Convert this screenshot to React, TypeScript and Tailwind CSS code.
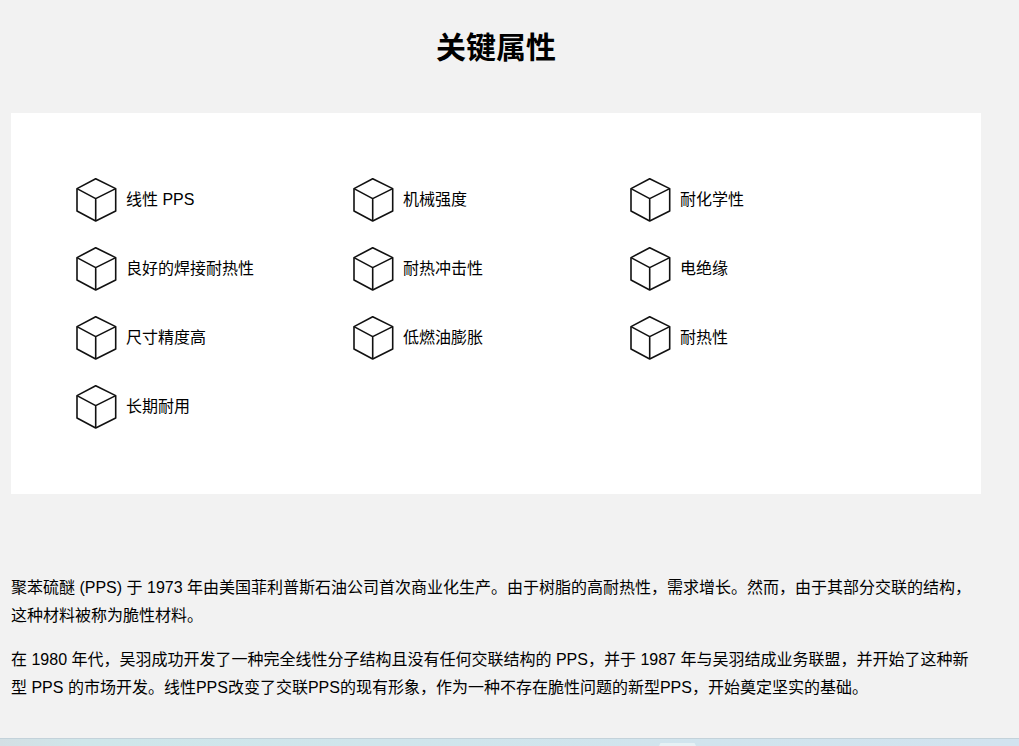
const properties = [
  "线性 PPS",
  "机械强度",
  "耐化学性",
  "良好的焊接耐热性",
  "耐热冲击性",
  "电绝缘",
  "尺寸精度高",
  "低燃油膨胀",
  "耐热性",
  "长期耐用",
];

const CubeIcon = () => (
  <svg width="44" height="44" viewBox="0 0 44 44" fill="none" stroke="#111111" strokeWidth="1.6" strokeLinejoin="round" className="shrink-0">
    <path d="M20.7 0.8L40.7 10.6V33L20.7 43L2 33V10.6Z" />
    <path d="M2 10.6L20.7 20.6L40.7 10.6M20.7 20.6V43" />
  </svg>
);

export default function App() {
  return (
    <div className="relative h-[746px] overflow-hidden bg-[#f2f2f2] font-['Liberation_Sans','Noto_Sans_CJK_SC',sans-serif] text-black">
      <div className="ml-[11px] w-[970px]">
        <h1 className="pt-[28px] text-center text-[30px] font-bold leading-[40px]">关键属性</h1>
        <div className="mt-[45px] h-[381px] bg-white pl-[64px] pt-[65px]">
          <div className="grid grid-cols-[277px_277px_277px] gap-y-[25px]">
            {properties.map((name) => (
              <div key={name} className="flex h-[44px] items-center gap-[7px] text-base">
                <CubeIcon />
                <span>{name}</span>
              </div>
            ))}
          </div>
        </div>
        <div className="mt-[80px] text-base leading-[28px]">
          <p>聚苯硫醚 (PPS) 于 1973 年由美国菲利普斯石油公司首次商业化生产。由于树脂的高耐热性，需求增长。然而，由于其部分交联的结构，这种材料被称为脆性材料。</p>
          <p className="mt-[16px]">在 1980 年代，吴羽成功开发了一种完全线性分子结构且没有任何交联结构的 PPS，并于 1987 年与吴羽结成业务联盟，并开始了这种新型 PPS 的市场开发。线性PPS改变了交联PPS的现有形象，作为一种不存在脆性问题的新型PPS，开始奠定坚实的基础。</p>
        </div>
      </div>
      <div className="absolute bottom-0 left-0 right-0 h-[8px] border-t border-[#c3d2da] bg-gradient-to-r from-[#d3dfe4] via-[#cfe6ea] via-[8%] to-[#d2e3ef]">
        <div className="absolute bottom-0 left-[659px] h-[3px] w-[37px] bg-[#e6f1f5] [clip-path:polygon(4%_0,96%_0,100%_100%,0_100%)]" />
      </div>
    </div>
  );
}
